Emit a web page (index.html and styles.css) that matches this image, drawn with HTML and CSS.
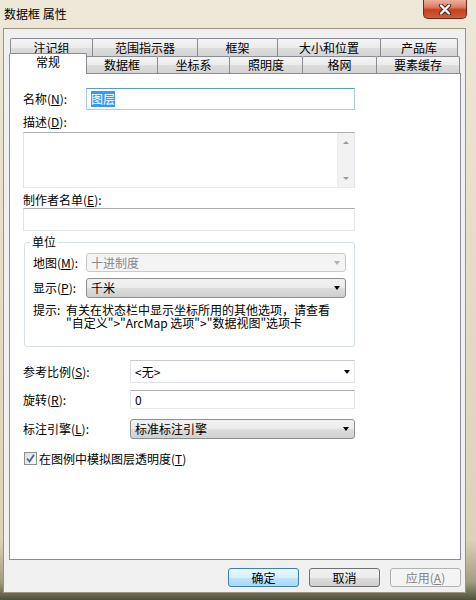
FILE: index.html
```html
<!DOCTYPE html>
<html lang="zh-CN">
<head>
    <meta charset="UTF-8">
    <title>数据框 属性</title>
    <link rel="stylesheet" href="styles.css">
</head>
<body>
    <div class="window">
        <!-- Title bar -->
        <div class="titlebar">
            <span class="title">数据框 属性</span>
            <div class="close">
                <svg width="16" height="11" viewBox="0 0 16 11">
                    <path d="M4 1.5L12 9.5M12 1.5L4 9.5" stroke="#4a2419" stroke-width="4.2" stroke-linecap="round"/>
                    <path d="M4 1.5L12 9.5M12 1.5L4 9.5" stroke="#fff" stroke-width="2.4" stroke-linecap="round"/>
                </svg>
            </div>
        </div>

        <div class="client">
            <!-- Tabs -->
            <div class="tab-row back">
                <div class="tab" style="width:83px">注记组</div>
                <div class="tab" style="width:106px">范围指示器</div>
                <div class="tab" style="width:81px">框架</div>
                <div class="tab" style="width:104px">大小和位置</div>
                <div class="tab" style="width:78px">产品库</div>
            </div>
            <div class="tab-row front">
                <div class="tab active" style="width:78px">常规</div>
                <div class="tab" style="width:72px">数据框</div>
                <div class="tab" style="width:73px">坐标系</div>
                <div class="tab" style="width:74px">照明度</div>
                <div class="tab" style="width:75px">格网</div>
                <div class="tab" style="width:84px">要素缓存</div>
            </div>

            <!-- General page -->
            <div class="panel">
                <div class="row row-name">
                    <span class="lbl lbl-short">名称(<u>N</u>):</span>
                    <div class="textbox focus field-name"><span class="sel">图层</span></div>
                </div>

                <div class="caption cap-desc">描述(<u>D</u>):</div>
                <div class="memo">
                    <div class="vscroll">
                        <span class="arrow up"></span>
                        <span class="arrow down"></span>
                    </div>
                </div>

                <div class="caption cap-credit">制作者名单(<u>E</u>):</div>
                <div class="textbox field-credit"></div>

                <fieldset class="group">
                    <legend>单位</legend>
                    <div class="row row-map">
                        <span class="lbl lbl-unit">地图(<u>M</u>):</span>
                        <div class="combo disabled field-unit">十进制度<span class="caret"></span></div>
                    </div>
                    <div class="row row-show">
                        <span class="lbl lbl-unit">显示(<u>P</u>):</span>
                        <div class="combo list field-unit">千米<span class="caret"></span></div>
                    </div>
                    <div class="hint">
                        <span class="hint-key">提示:</span>
                        <span>有关在状态栏中显示坐标所用的其他选项，请查看<br>"自定义"&gt;"ArcMap 选项"&gt;"数据视图"选项卡</span>
                    </div>
                </fieldset>

                <div class="row row-scale">
                    <span class="lbl lbl-long">参考比例(<u>S</u>):</span>
                    <div class="combo edit field-long">&lt;无&gt;<span class="caret"></span></div>
                </div>
                <div class="row row-rotate">
                    <span class="lbl lbl-long">旋转(<u>R</u>):</span>
                    <div class="textbox field-long">0</div>
                </div>
                <div class="row row-engine">
                    <span class="lbl lbl-long">标注引擎(<u>L</u>):</span>
                    <div class="combo list field-long">标准标注引擎<span class="caret"></span></div>
                </div>

                <div class="check-row">
                    <span class="checkbox">
                        <svg width="11" height="11" viewBox="0 0 11 11">
                            <path d="M2 5.5L4.5 8.5L9 1.8" fill="none" stroke="#4763a8" stroke-width="1.8"/>
                        </svg>
                    </span>
                    <span>在图例中模拟图层透明度(<u>T</u>)</span>
                </div>
            </div>

            <!-- Dialog buttons -->
            <div class="buttons">
                <button class="btn default">确定</button>
                <button class="btn">取消</button>
                <button class="btn" disabled>应用(<u>A</u>)</button>
            </div>
        </div>
    </div>
</body>
</html>
```

FILE: styles.css
```css
* {
    box-sizing: border-box;
}
body {
    margin: 0;
    font-family: "Noto Sans CJK SC", "Liberation Sans", sans-serif;
    font-size: 12px;
    line-height: 16px;
    color: #000;
}
u {
    text-decoration: underline;
}

/* window frame */
.window {
    width: 476px;
    height: 600px;
    display: flex;
    flex-direction: column;
    background: linear-gradient(to bottom, #eee8d9 0, #e6ddc8 40%, #dcd2b8 90%, #a29c80 97%, #4d5238 100%);
    overflow: hidden;
}
.titlebar {
    height: 28px;
    display: flex;
    align-items: center;
    padding-left: 4px;
}
.title {
    flex: 1;
}
.close {
    align-self: flex-start;
    width: 44px;
    height: 19px;
    margin-right: 9px;
    border: 1px solid #6b2a1c;
    border-top: none;
    border-radius: 0 0 5px 5px;
    background: linear-gradient(to bottom, #eab0a0 0, #dc7c63 40%, #c5401f 55%, #d25c3c 100%);
    display: flex;
    align-items: center;
    justify-content: center;
}
.client {
    flex: 1;
    margin: 0 10px 7px 3px;
    background: #f0f0f0;
    border: 1px solid #9c957e;
    padding: 9px 4px 0 5px;
    display: flex;
    flex-direction: column;
}

/* tabs */
.tab-row {
    display: flex;
    align-items: flex-start;
    height: 18px;
}
.tab-row.back {
    margin-left: 1px;
}
.tab-row.front {
    height: 17px;
}
.tab {
    height: 100%;
    margin-right: -1px;
    border: 1px solid #898c95;
    border-bottom: none;
    border-radius: 2px 2px 0 0;
    background: linear-gradient(to bottom, #f4f4f4 0, #ebebeb 50%, #dddddd 51%, #d4d4d4 100%);
    display: flex;
    justify-content: center;
    align-items: center;
    white-space: nowrap;
}
.tab.active {
    position: relative;
    z-index: 1;
    height: 21px;
    margin-top: -3px;
    margin-bottom: -1px;
    background: #fff;
    align-items: flex-start;
}

/* page */
.panel {
    height: 487px;
    background: #fff;
    border: 1px solid #898c95;
    padding-left: 13px;
}
.row {
    display: flex;
    align-items: center;
}
.lbl {
    white-space: nowrap;
}
.lbl-short { width: 63px; }
.lbl-unit { width: 53px; }
.lbl-long { width: 107px; }

.row-name { margin-top: 14px; height: 22px; }
.caption { height: 16px; }
.cap-desc { margin-top: 4px; }
.cap-credit { margin-top: 4px; }

.textbox {
    height: 100%;
    background: #fff;
    border: 1px solid #e2e3ea;
    border-top-color: #abadb3;
    border-bottom-color: #e3e9ef;
    padding-left: 4px;
    display: flex;
    align-items: center;
}
.textbox.focus {
    border-color: #a9cdf0;
    border-top-color: #5b9ad8;
}
.sel {
    background: #3399ff;
    color: #fff;
}
.field-name { width: 269px; }
.field-credit {
    width: 332px;
    height: 23px;
}
.field-unit { width: 260px; }
.field-long { width: 225px; }

.memo {
    width: 332px;
    height: 56px;
    margin-top: 2px;
    border: 1px solid #e2e3ea;
    border-top-color: #abadb3;
    border-bottom-color: #e3e9ef;
    display: flex;
    justify-content: flex-end;
}
.vscroll {
    width: 17px;
    background: #f2f2f2;
    border-left: 1px solid #ececec;
    display: flex;
    flex-direction: column;
    justify-content: space-between;
    align-items: center;
    padding: 8px 0 7px;
}
.arrow {
    width: 0;
    height: 0;
    border-left: 3px solid transparent;
    border-right: 3px solid transparent;
}
.arrow.up { border-bottom: 3px solid #9a9a9a; }
.arrow.down { border-top: 3px solid #9a9a9a; }

/* combo boxes */
.combo {
    height: 100%;
    display: flex;
    align-items: center;
    padding: 0 5px 0 4px;
    white-space: nowrap;
}
.caret {
    margin-left: auto;
    width: 0;
    height: 0;
    border-left: 3.5px solid transparent;
    border-right: 3.5px solid transparent;
    border-top: 4px solid #000;
}
.combo.list {
    border: 1px solid #8e8f8f;
    border-radius: 3px;
    background: linear-gradient(to bottom, #f2f2f2 0, #ebebeb 50%, #dddddd 51%, #cfcfcf 100%);
}
.combo.disabled {
    border: 1px solid #c8cbcd;
    border-radius: 3px;
    background: #f4f4f4;
    color: #8a8a8a;
}
.combo.disabled .caret {
    border-top-color: #b0b0b0;
}
.combo.edit {
    background: #fff;
    border: 1px solid #e2e3ea;
    border-top-color: #c8cad0;
    padding-right: 4px;
}

/* units group */
.group {
    margin: 3px 0 0 1px;
    width: 331px;
    padding: 0 0 17px 8px;
    border: 1px solid #d5dfe5;
    border-radius: 3px;
    min-inline-size: 0;
}
.group legend {
    margin-left: -3px;
    padding: 0 2px;
    line-height: 16px;
}
.row-map { margin-top: 3px; height: 19px; }
.row-show { margin-top: 6px; height: 20px; }
.hint {
    margin-top: 5px;
    display: flex;
    line-height: 13px;
    white-space: nowrap;
}
.hint-key { width: 33px; }

.row-scale { margin-top: 13px; height: 23px; }
.row-rotate { margin-top: 7px; height: 19px; }
.row-engine { margin-top: 10px; height: 20px; }

.check-row {
    margin: 13px 0 0 1px;
    display: flex;
    align-items: center;
    gap: 2px;
    height: 13px;
}
.checkbox {
    width: 13px;
    height: 13px;
    border: 1px solid #8e8f8f;
    background: linear-gradient(to bottom right, #dcdcdc, #fbfbfb);
    display: flex;
    align-items: center;
    justify-content: center;
}

/* dialog buttons */
.buttons {
    margin-top: 8px;
    display: flex;
    justify-content: flex-end;
    gap: 10px;
}
.btn {
    width: 71px;
    height: 19px;
    padding: 0;
    font: inherit;
    color: #000;
    border: 1px solid #707070;
    border-radius: 3px;
    background: linear-gradient(to bottom, #f2f2f2 0, #ebebeb 50%, #dddddd 51%, #cfcfcf 100%);
}
.btn.default {
    border-color: #3c7fb1;
    background: linear-gradient(to bottom, #eaf6fd 0, #d9f0fc 50%, #bee6fd 51%, #a7d9f5 100%);
}
.btn:disabled {
    border-color: #adb2b5;
    background: #f4f4f4;
    color: #838383;
}
```
